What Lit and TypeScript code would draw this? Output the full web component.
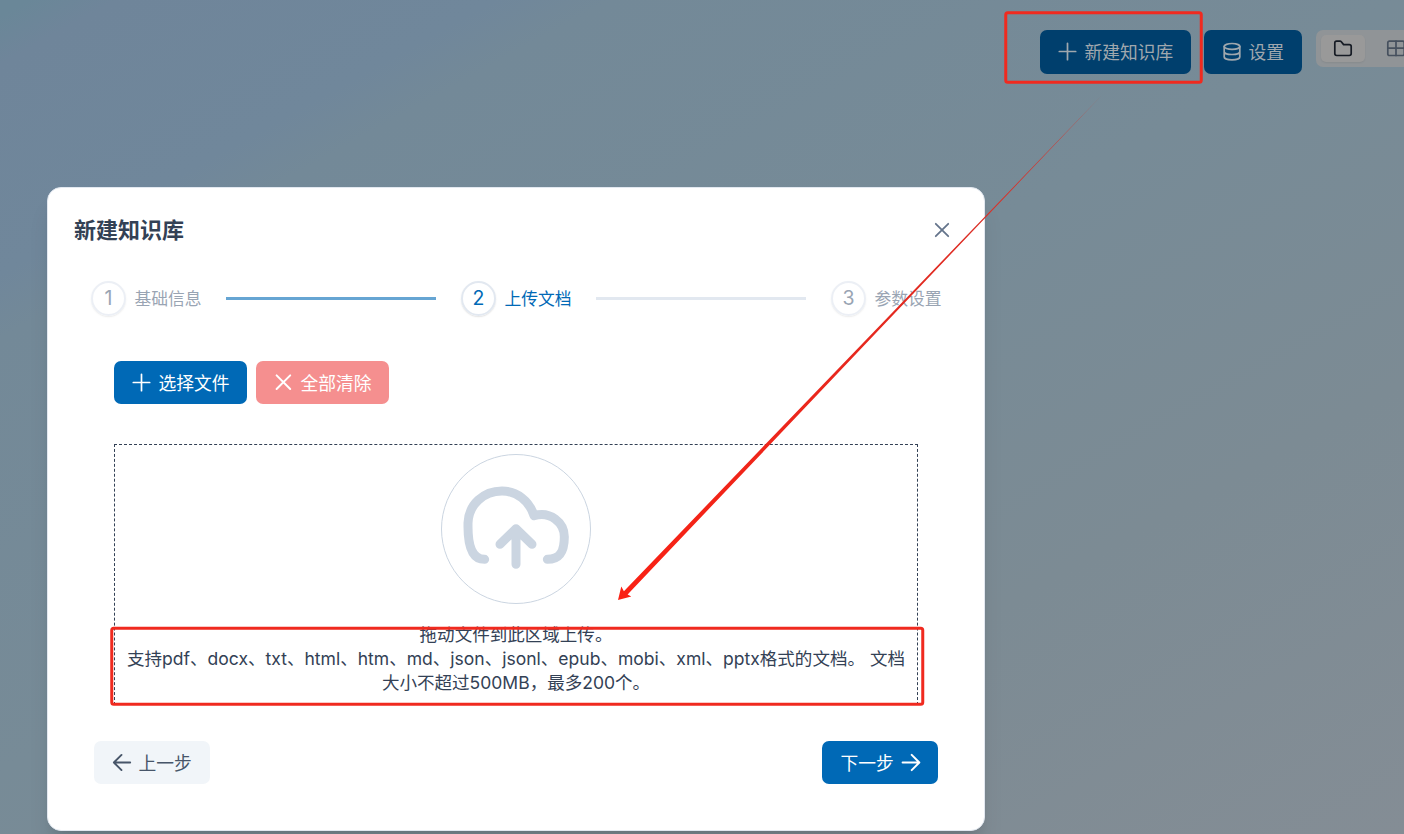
import { LitElement, html, css, svg } from "lit";
import { customElement } from "lit/decorators.js";

const icon = (body: unknown, size = 18, width = 1.7) => html`<svg
  class="icon" width=${size} height=${size} viewBox="0 0 18 18" fill="none"
  stroke="currentColor" stroke-width=${width} stroke-linecap="round" stroke-linejoin="round">${body}</svg>`;

const plus = svg`<path d="M8.5 .3V16.7M.3 8.5H16.7"/>`;
const cross = svg`<path d="M2 2L16 16M16 2L2 16"/>`;
const clearCross = svg`<path d="M1.6 1.4L15.2 15M15.2 1.4L1.6 15"/>`;
const database = svg`<ellipse cx="9" cy="3.4" rx="7.8" ry="2.9"/><path d="M1.2 3.4V14C1.2 15.6 4.7 16.9 9 16.9S16.8 15.6 16.8 14V3.4M1.2 8.7C1.2 10.3 4.7 11.5 9 11.5S16.8 10.3 16.8 8.7"/>`;
const folder = svg`<path d="M.8 13.6V3Q.8 1.1 2.7 1.1H6Q6.8 1.1 7.3 1.7L9.6 4.6H15.3Q17.2 4.6 17.2 6.5V13.6Q17.2 15.5 15.3 15.5H2.7Q.8 15.5 .8 13.6Z"/>`;
const table = svg`<rect x=".8" y="1.1" width="16.4" height="14.4" rx="1.6"/><path d="M1 8.2H17M9 1.1V15.5"/>`;
const left = svg`<path d="M17.2 8.5H1M8.5 .9L.9 8.5L8.5 16.1"/>`;
const right = svg`<path d="M.6 8.5H17.2M9.7 .9L17.3 8.5L9.7 16.1"/>`;

@customElement("app-root")
export class AppRoot extends LitElement {
  static styles = css`
    :host {
      display: block;
      position: relative;
      width: 1404px;
      height: 834px;
      overflow: hidden;
      box-sizing: border-box;
      font: 17.54px/24px Inter, "Noto Sans CJK SC", sans-serif;
      color: #334155;
      background: linear-gradient(151deg, #6a8798 0%, #6a8798 1%, #6f859a 4%, #70879b 17%, #738998 21%, #778b97 48%, #7c8b94 72%, #848d95 100%);
    }
    * { box-sizing: border-box; }
    .icon { display: block; flex: none; overflow: visible; }
    .toolbar {
      display: flex;
      align-items: flex-start;
      height: 187px;
      padding: 30px 0 0 1040px;
    }
    .btn {
      display: flex;
      align-items: center;
      gap: 8px;
      flex: none;
      height: 43px;
      padding: 0 17.5px 0 18.5px;
      border: 0;
      border-radius: 7px;
      font: inherit;
      font-size: 17.75px;
      color: #fff;
      background: #0069b6;
      white-space: nowrap;
    }
    .btn span { padding-top: 2px; }
    .toolbar .btn { height: 44px; background: #003f6d; color: #a0a8ae; }
    .toolbar .btn span { padding-top: 1px; }
    .create { width: 151px; }
    .setup { width: 98px; margin-left: 13px; }
    .toggle {
      display: flex;
      align-items: center;
      flex: none;
      width: 110px;
      height: 37px;
      margin-left: 14px;
      padding: 5px;
      border-radius: 7px;
      background: #909497;
      color: #46505e;
    }
    .tab { display: grid; place-items: center; width: 44px; height: 27px; border-radius: 5px; }
    .tab.on { background: #999; color: #161b24; box-shadow: 0 1px 2px #0001; }
    .tab + .tab { margin-left: 9px; }
    .dialog {
      width: 938px;
      height: 644px;
      margin-left: 47px;
      padding: 0 46px;
      border: 1px solid #e2e8f0;
      border-radius: 14px;
      background: #fff;
      box-shadow: 0 20px 25px -5px #0000001a, 0 8px 10px -6px #0000001a;
    }
    .head {
      display: flex;
      align-items: center;
      justify-content: space-between;
      height: 84px;
      margin: 0 -12px 0 -20px;
      color: #64748b;
    }
    .title { margin: 0; font-size: 22px; font-weight: 700; color: #334155; }
    .steps { display: flex; align-items: center; height: 52px; margin: 0 -12px 2px -3px; font-size: 16.8px; }
    .step { display: flex; align-items: center; gap: 8.5px; flex: none; width: 111px; color: #64748b; white-space: nowrap; opacity: .65; }
    .step.on { color: #0069b6; opacity: 1; }
    .step > :last-child { padding-top: 2px; }
    .num {
      display: grid;
      place-items: center;
      flex: none;
      width: 35px;
      height: 35px;
      border: 2px solid #e2e8f0;
      border-radius: 50%;
      font-size: 19.5px;
      box-shadow: 0 1px 1px #0000000a, 0 1px 2px #00000014;
    }
    .line { flex: none; width: 210px; height: 3px; margin: 0 25px 0 24px; background: #e2e8f0; }
    .line.done { background: #66a5d3; }
    .actions { display: flex; gap: 9px; padding: 35px 0 0 20px; }
    .actions .btn { width: 133px; }
    .clear { background: #f58f8f; }
    .drop {
      width: 804px;
      height: 261px;
      margin: 40px 0 0 20px;
      padding-top: 9px;
      border: 1px dashed #334155;
      text-align: center;
      white-space: nowrap;
    }
    .cloud { display: block; margin: 0 auto 19px; }
    .drop p { margin: 0; }
    .foot { display: flex; justify-content: space-between; padding-top: 36px; width: 844px; }
    .foot .btn { width: 116px; }
    .foot .prev { background: #f1f5f9; color: #475569; }
    .marks { position: absolute; inset: 0; pointer-events: none; }
  `;

  render() {
    return html`
      <header class="toolbar">
        <button class="btn create">${icon(plus)}<span>新建知识库</span></button>
        <button class="btn setup">${icon(database)}<span>设置</span></button>
        <div class="toggle">
          <span class="tab on">${icon(folder)}</span>
          <span class="tab">${icon(table)}</span>
        </div>
      </header>
      <section class="dialog">
        <div class="head">
          <h2 class="title">新建知识库</h2>
          ${icon(cross, 16, 2)}
        </div>
        <div class="steps">
          <div class="step"><span class="num">1</span><span>基础信息</span></div>
          <div class="line done"></div>
          <div class="step on"><span class="num">2</span><span>上传文档</span></div>
          <div class="line"></div>
          <div class="step"><span class="num">3</span><span>参数设置</span></div>
        </div>
        <div class="actions">
          <button class="btn">${icon(plus)}<span>选择文件</span></button>
          <button class="btn clear">${icon(clearCross, 18, 2)}<span>全部清除</span></button>
        </div>
        <div class="drop">
          <svg class="cloud" width="150" height="150" viewBox="63 42 450 450" fill="none" stroke="#cbd5e1">
            <circle cx="288" cy="267" r="223.5" stroke-width="3" />
            <path stroke-width="27" stroke-linecap="round" stroke-linejoin="round"
              d="M194 358C158 358 144 320 144 260V249C146 194 190 153 246 153C290 153 328 182 342 227C391 212 433 248 433 290C433 335 420 358 382 358M288 373V266M240 313L288 266L336 313" />
          </svg>
          <p>拖动文件到此区域上传。</p>
          <p>支持pdf、docx、txt、html、htm、md、json、jsonl、epub、mobi、xml、pptx格式的文档。 文档</p>
          <p>大小不超过500MB，最多200个。</p>
        </div>
        <div class="foot">
          <button class="btn prev">${icon(left, 18, 1.9)}<span>上一步</span></button>
          <button class="btn"><span>下一步</span>${icon(right, 18, 2)}</button>
        </div>
      </section>
      <svg class="marks" width="1404" height="834" viewBox="0 0 1404 834" fill="none">
        <defs>
          <linearGradient id="fade" gradientUnits="userSpaceOnUse" x1="618" y1="600" x2="1098" y2="101">
            <stop offset="0" stop-color="#fa2114" />
            <stop offset=".7" stop-color="#df2b22" />
            <stop offset="1" stop-color="#c43f39" />
          </linearGradient>
        </defs>
        <rect x="1005.75" y="12.75" width="195.5" height="69.5" rx="2" stroke="#f02a1f" stroke-width="3" />
        <rect x="111.75" y="628.25" width="811" height="76" rx="2" stroke="#f02a1f" stroke-width="3" />
        <path fill="url(#fade)" d="M618 600L621.3 586.6L623.9 591.2L1102 95L627.6 594.5L631.3 596.6Z" />
      </svg>
    `;
  }
}
